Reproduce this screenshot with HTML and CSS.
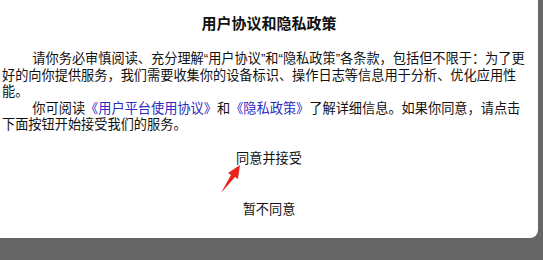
FILE: index.html
```html
<!DOCTYPE html>
<html lang='zh-CN'>
<head>
  <title>用户协议和隐私政策</title>

  <link rel="stylesheet" href="styles.css">
</head>
<body>
  <div id='dialog'>
    <h2 class='title'>用户协议和隐私政策</h2>

    <div class='content'>
      <p>请你务必审慎阅读、充分理解“用户协议”和“隐私政策”各条款，包括但不限于：为了更好的向你提供服务，我们需要收集你的设备标识、操作日志等信息用于分析、优化应用性能。</p>
      <p>你可阅读<a href='#'>《用户平台使用协议》</a>和<a href='#'>《隐私政策》</a>了解详细信息。如果你同意，请点击下面按钮开始接受我们的服务。</p>
    </div>

    <div class='actions'>
      <button id='agreeBtn'>同意并接受</button>
      <button id='rejectBtn'>暂不同意</button>
    </div>

    <!-- arrow pointing at the accept button -->
    <svg class='arrow' width='30' height='34' viewBox='0 0 30 34'>
      <path d='M5 31 L15 13 L12 11 L24 3 L22 17 L19 15 Z' fill='#e8231c'/>
    </svg>
  </div>
</body>
</html>
```

FILE: styles.css
```css
body {
  margin: 0;
  background-color: #666666;
  font-family: 'Liberation Sans', 'Noto Sans CJK SC', sans-serif;
  color: #111;
}

#dialog {
  position: relative;
  width: 538px;
  height: 238px;
  background-color: white;
  border-bottom-right-radius: 8px;
  box-sizing: border-box;
  padding-top: 14px;
}

.title {
  margin: 0;
  font-size: 15px;
  line-height: 20px;
  font-weight: bold;
  text-align: center;
}

.content {
  margin-top: 17px;
  padding: 0 12px 0 2px;
  font-size: 13.2px;
  line-height: 16.5px;
}

.content p {
  margin: 0;
  text-indent: 2.3em;
}

.content a {
  color: #2b2bbf;
  text-decoration: none;
}

.actions {
  display: flex;
  flex-direction: column;
  align-items: center;
  gap: 35px;
  margin-top: 17px;
}

button {
  border: none;
  background: none;
  padding: 0;
  font-family: 'Liberation Sans', 'Noto Sans CJK SC', sans-serif;
  font-size: 13.2px;
  line-height: 16px;
  color: #111;
}

.arrow {
  position: absolute;
  left: 216px;
  top: 162px;
}
```
